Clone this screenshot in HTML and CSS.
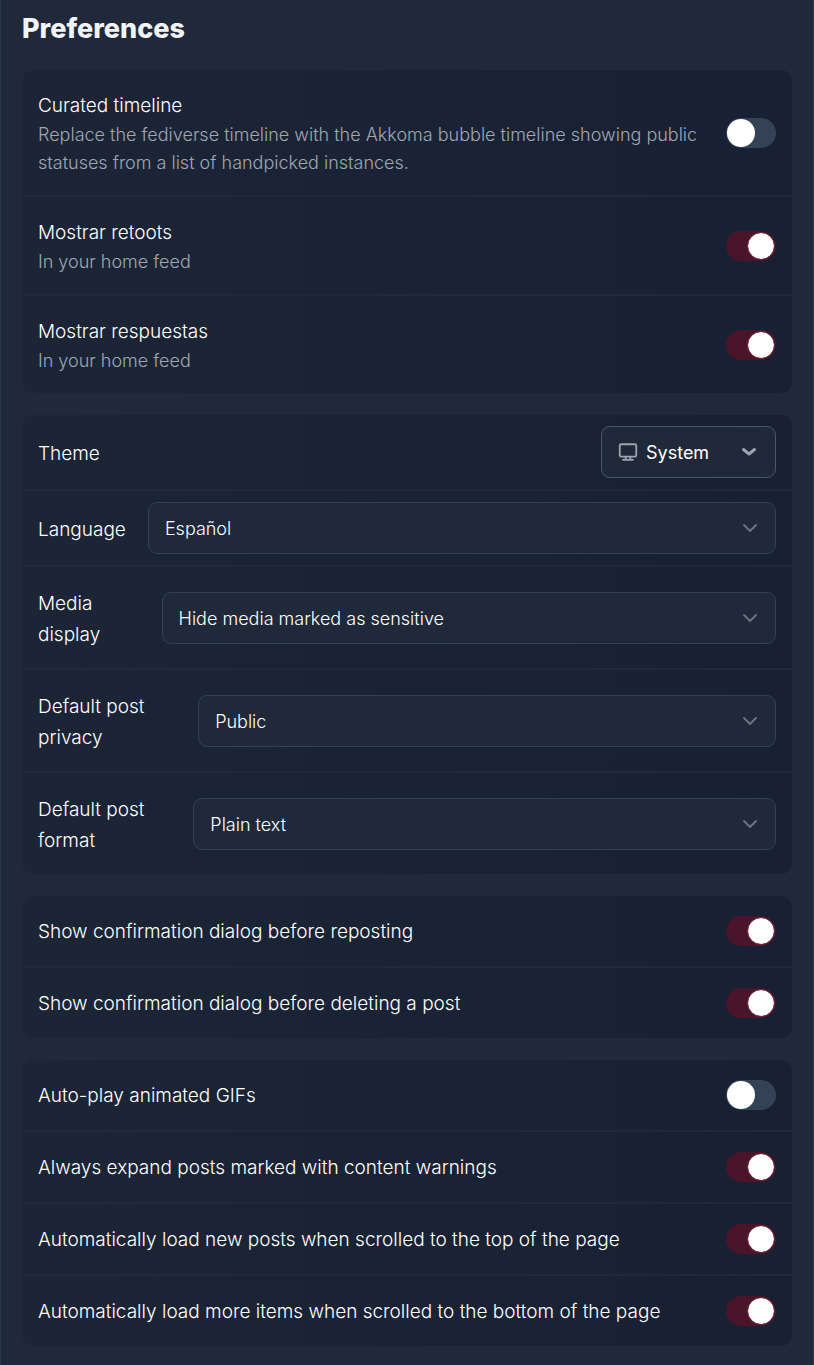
FILE: index.html
```html
<!DOCTYPE html>
<html lang="en">
<head>
<meta charset="utf-8">
<meta name="viewport" content="width=device-width, initial-scale=1">
<title>Preferences</title>
<link rel="stylesheet" href="styles.css">
</head>
<body>
<main class="page">
  <h1 class="title">Preferences</h1>
  <form class="groups">
    <section class="list">
      <div class="row row-tall">
        <div class="text">
          <label class="label" for="curated">Curated timeline</label>
          <p class="hint" id="curated-hint">Replace the fediverse timeline with the Akkoma bubble timeline showing public statuses from a list of handpicked instances.</p>
        </div>
        <input class="toggle" type="checkbox" id="curated" aria-describedby="curated-hint">
      </div>
      <div class="row row-tall">
        <div class="text">
          <label class="label" for="retoots">Mostrar retoots</label>
          <p class="hint" id="retoots-hint">In your home feed</p>
        </div>
        <input class="toggle" type="checkbox" id="retoots" aria-describedby="retoots-hint" checked>
      </div>
      <div class="row row-tall">
        <div class="text">
          <label class="label" for="replies">Mostrar respuestas</label>
          <p class="hint" id="replies-hint">In your home feed</p>
        </div>
        <input class="toggle" type="checkbox" id="replies" aria-describedby="replies-hint" checked>
      </div>
    </section>

    <section class="list">
      <div class="row">
        <label class="label" for="theme">Theme</label>
        <button class="theme" type="button" id="theme" aria-haspopup="listbox">
          <svg class="icon" viewBox="0 0 24 24" aria-hidden="true"><rect x="3" y="3.500" width="18" height="13.500" rx="1.500"/><path d="M9.500 17v3.500M14.500 17v3.500M6.500 20.500h11"/></svg>
          <span>System</span>
          <svg class="chevron" viewBox="0 0 16 16" aria-hidden="true"><path d="M2.500 5.500l5.500 4.500 5.500-4.500"/></svg>
        </button>
      </div>
      <div class="row">
        <label class="label" for="language">Language</label>
        <div class="field">
          <select class="select" id="language"><option>Español</option></select>
          <svg class="caret" viewBox="0 0 16 16" aria-hidden="true"><path d="M2 5l6 6 6-6"/></svg>
        </div>
      </div>
      <div class="row row-double">
        <label class="label" for="media">Media display</label>
        <div class="field">
          <select class="select" id="media"><option>Hide media marked as sensitive</option></select>
          <svg class="caret" viewBox="0 0 16 16" aria-hidden="true"><path d="M2 5l6 6 6-6"/></svg>
        </div>
      </div>
      <div class="row row-double">
        <label class="label" for="privacy">Default post privacy</label>
        <div class="field">
          <select class="select" id="privacy"><option>Public</option></select>
          <svg class="caret" viewBox="0 0 16 16" aria-hidden="true"><path d="M2 5l6 6 6-6"/></svg>
        </div>
      </div>
      <div class="row row-double">
        <label class="label" for="format">Default post format</label>
        <div class="field">
          <select class="select" id="format"><option>Plain text</option></select>
          <svg class="caret" viewBox="0 0 16 16" aria-hidden="true"><path d="M2 5l6 6 6-6"/></svg>
        </div>
      </div>
    </section>

    <section class="list">
      <div class="row row-toggle">
        <label class="label" for="confirm-repost">Show confirmation dialog before reposting</label>
        <input class="toggle" type="checkbox" id="confirm-repost" checked>
      </div>
      <div class="row row-toggle">
        <label class="label" for="confirm-delete">Show confirmation dialog before deleting a post</label>
        <input class="toggle" type="checkbox" id="confirm-delete" checked>
      </div>
    </section>

    <section class="list">
      <div class="row row-toggle">
        <label class="label" for="gifs">Auto-play animated GIFs</label>
        <input class="toggle" type="checkbox" id="gifs">
      </div>
      <div class="row row-toggle">
        <label class="label" for="expand">Always expand posts marked with content warnings</label>
        <input class="toggle" type="checkbox" id="expand" checked>
      </div>
      <div class="row row-toggle">
        <label class="label" for="load-new">Automatically load new posts when scrolled to the top of the page</label>
        <input class="toggle" type="checkbox" id="load-new" checked>
      </div>
      <div class="row row-toggle">
        <label class="label" for="load-more">Automatically load more items when scrolled to the bottom of the page</label>
        <input class="toggle" type="checkbox" id="load-more" checked>
      </div>
    </section>
  </form>
</main>
</body>
</html>
```
FILE: styles.css
```css
*, *::before { box-sizing: border-box; }
body {
  margin: 0;
  background: #1f293a;
  color: #fff;
  font-family: Inter, "Liberation Sans", sans-serif;
}
.page {
  padding: 11px 21px 19px;
  border: solid #2e3a4c;
  border-width: 0 1px;
}
.title {
  margin: 0 0 23px;
  font-size: 27px;
  line-height: 36px;
  font-weight: 800;
  color: #f3f4f6;
}
.groups { display: grid; gap: 22px; }
.list {
  display: grid;
  gap: 2px;
  border-radius: 11px;
  overflow: hidden;
}
.row {
  display: flex;
  align-items: center;
  justify-content: space-between;
  gap: 22px;
  padding: 11px 16px;
  background: linear-gradient(90deg, #1b2536, #172133);
}
.row-tall { padding: 19px 16px 18px; }
.row-double { padding: 19px 16px 18px; }
.row-toggle { padding: 19px 16px; }
.label {
  display: block;
  padding-top: 2px;
  font-size: 19px;
  line-height: 31px;
  font-weight: 350;
}
.row-tall .label, .row-toggle .label { line-height: 30px; }
.hint {
  margin: 0;
  font-size: 18px;
  line-height: 28px;
  font-weight: 300;
  color: #a0a7b3;
}
.toggle {
  appearance: none;
  flex: none;
  display: flex;
  width: 50px;
  height: 30px;
  margin: 0;
  padding: 1px;
  border-radius: 15px;
  background: #334254;
}
.toggle::before {
  content: "";
  width: 28px;
  height: 28px;
  border-radius: 50%;
  background: #fff;
}
.toggle:checked {
  justify-content: flex-end;
  background: #4a152a;
}
.toggle:checked::before {
  border: 1px solid #742d43;
  background-clip: padding-box;
}
.theme {
  display: flex;
  align-items: center;
  gap: 7px;
  width: 175px;
  height: 52px;
  padding: 0 18px 0 15px;
  border: 1px solid #4b5666;
  border-radius: 9px;
  background: #1f293a;
  color: #fff;
  font-family: inherit;
  font-size: 18px;
}
.icon, .chevron, .caret {
  flex: none;
  fill: none;
  stroke: #9ca3af;
  stroke-linecap: round;
  stroke-linejoin: round;
}
.icon { width: 22px; height: 22px; stroke-width: 2; }
.chevron { width: 16px; height: 16px; margin-left: auto; stroke-width: 3; }
.field {
  display: grid;
  align-items: center;
  width: 100%;
}
.select, .caret { grid-area: 1 / 1; }
.select {
  appearance: none;
  width: 100%;
  height: 52px;
  padding: 0 48px 0 16px;
  border: 1px solid #334154;
  border-radius: 9px;
  background: #1f293a;
  color: #fff;
  font-family: inherit;
  font-size: 18px;
  font-weight: 350;
}
.caret {
  width: 16px;
  height: 16px;
  margin-right: 18px;
  justify-self: end;
  stroke: #6b7280;
  stroke-width: 2;
  pointer-events: none;
}
```
